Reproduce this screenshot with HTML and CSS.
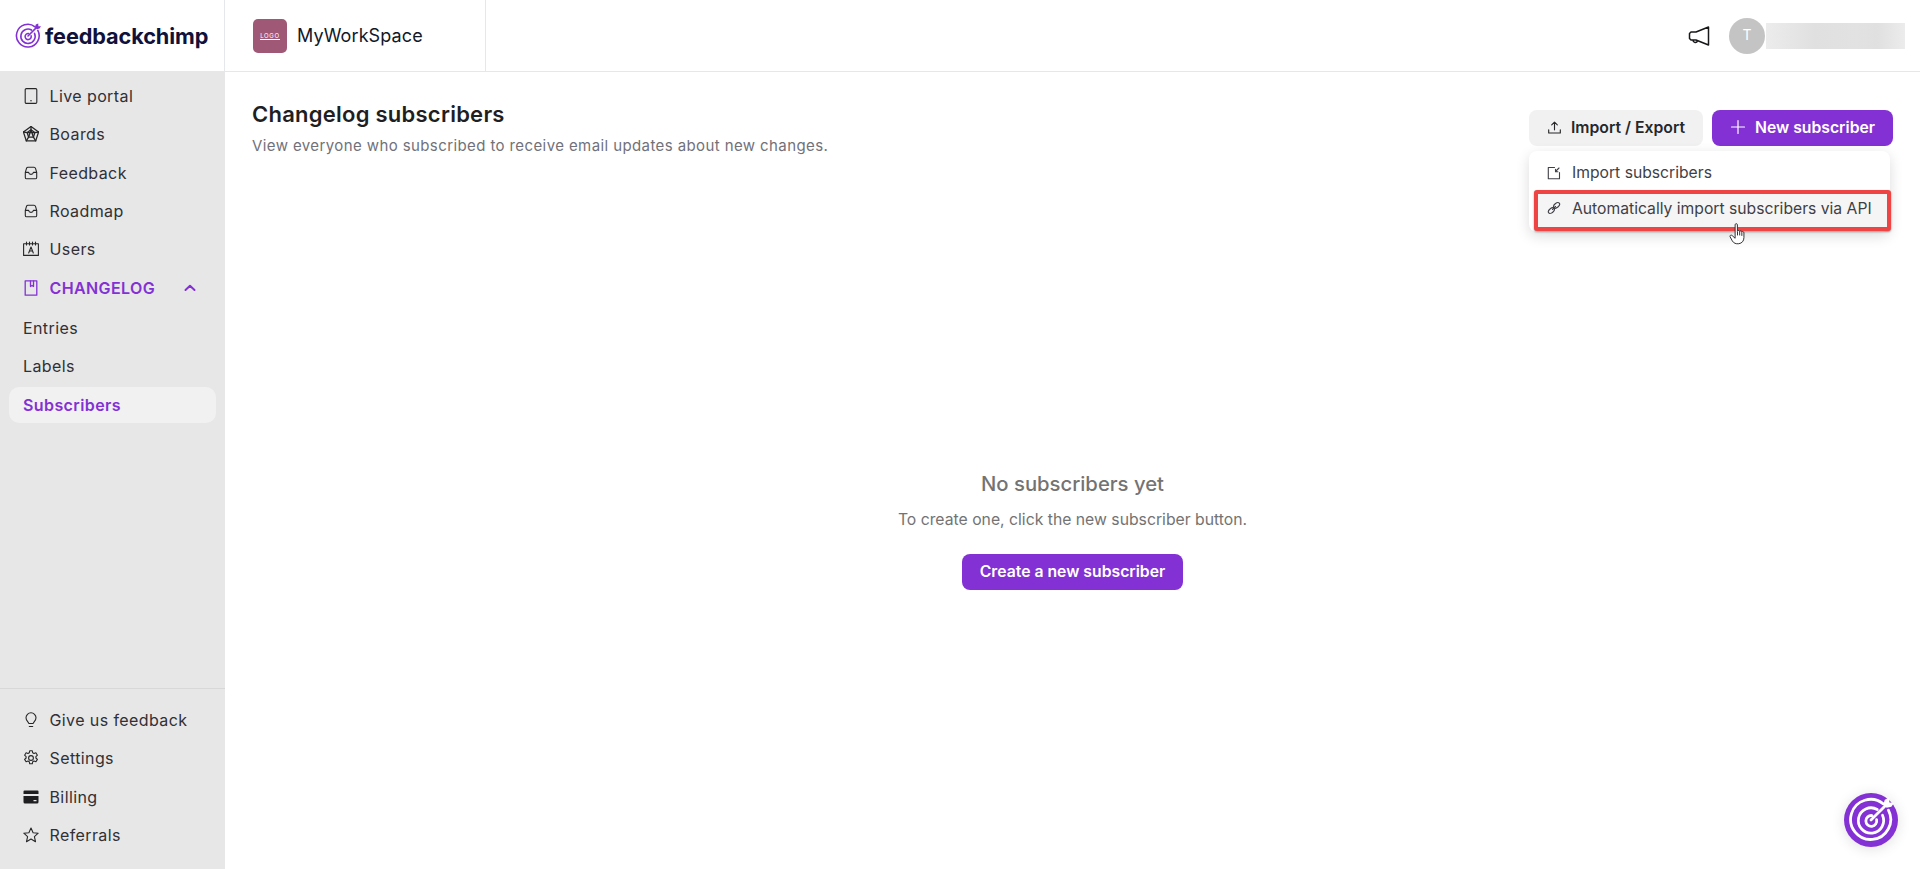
FILE: index.html
```html
<!DOCTYPE html>
<html lang="en">
<head>
<meta charset="utf-8">
<title>Changelog subscribers</title>
<link rel="stylesheet" href="styles.css">
</head>
<body>
<svg class="defs" width="0" height="0" aria-hidden="true">
  <symbol id="target" viewBox="0 0 28 28">
    <g fill="none" stroke="currentColor" stroke-linecap="round">
      <path d="M21.5 4.2A12.2 12.2 0 1 0 24.6 8" stroke-width="1.7"/>
      <path d="M17.8 7.6a7.7 7.7 0 1 0 3.2 3.5" stroke-width="1.7"/>
      <path d="M14.6 11.3a3.3 3.3 0 1 0 2.8 2.5" stroke-width="1.7"/>
      <path d="M14 14 23 5" stroke-width="1.7"/>
    </g>
    <path d="M21.5 4.5 22.4 1.6 25 0.5 25.2 3.4 28 3.6 26.4 6 23.5 6.6Z" fill="currentColor"/>
  </symbol>
</svg>
<div class="app">
  <aside class="sidebar">
    <div class="brand">
      <svg class="brand-mark"><use href="#target"/></svg>
      <span class="brand-name">feedbackchimp</span>
    </div>
    <nav class="nav-top">
      <a class="nav-item"><svg class="ico" viewBox="0 0 16 16"><rect x="2.2" y=".6" width="11.600" height="14.800" rx="1.200"/><path d="M7.600 12.800h.8"/></svg>Live portal</a>
      <a class="nav-item"><svg class="ico ico-dense" viewBox="0 0 16 16"><path d="M8 .5 15.600 6l-2.900 8.900H3.300L.4 6Z"/><path d="M8 3.800 11.800 6.600 10.400 11.200H5.600L4.200 6.600Z"/><path d="M8 .5v3.300M15.600 6l-3.800.6M12.700 14.900l-2.300-3.700M3.300 14.900l2.300-3.700M.4 6l3.800.6M8 3.800 5.600 11.200M8 3.800l2.400 7.400M4.200 6.600h7.600"/></svg>Boards</a>
      <a class="nav-item"><svg class="ico" viewBox="0 0 16 16"><path d="M2.300 7.400 3.500 3.300c.2-.7.8-1.100 1.500-1.100h6c.7 0 1.300.4 1.500 1.100l1.200 4.100M2.300 7.400v5c0 .8.6 1.400 1.400 1.400h8.600c.8 0 1.400-.6 1.400-1.400v-5M2.300 7.400h3.300c.2 1.200 1.100 2 2.400 2s2.200-.8 2.400-2h3.300"/></svg>Feedback</a>
      <a class="nav-item"><svg class="ico" viewBox="0 0 16 16"><path d="M2.300 7.400 3.500 3.300c.2-.7.8-1.100 1.500-1.100h6c.7 0 1.300.4 1.500 1.100l1.200 4.100M2.300 7.400v5c0 .8.6 1.400 1.400 1.400h8.600c.8 0 1.400-.6 1.400-1.400v-5M2.300 7.400h3.300c.2 1.200 1.100 2 2.400 2s2.200-.8 2.400-2h3.300"/></svg>Roadmap</a>
      <a class="nav-item"><svg class="ico" viewBox="0 0 16 16"><rect x=".6" y="2.800" width="14.800" height="11.600"/><path d="M3.500 1v3M6.500 1v3M9.500 1v3M12.500 1v3"/><path d="M5.700 12 8 6l2.300 6M6.500 10h3"/></svg>Users</a>
      <a class="nav-item nav-section"><svg class="ico" viewBox="0 0 16 16"><path d="M2.200.8h11.600v14.400H2.200Z"/><path d="M7.500.8v5.700l1.500-1 1.500 1V.8"/></svg><span class="nav-section-label">CHANGELOG</span><svg class="chev" viewBox="0 0 12 8"><path d="M1.500 6 6 1.800 10.500 6"/></svg></a>
      <a class="nav-sub">Entries</a>
      <a class="nav-sub">Labels</a>
      <a class="nav-sub nav-sub-active">Subscribers</a>
    </nav>
    <nav class="nav-bottom">
      <a class="nav-item"><svg class="ico" viewBox="0 0 16 16"><path d="M5.800 11.500C5.500 9.800 3 8.900 3 5.800a5 5 0 0 1 10 0c0 3.100-2.500 4-2.800 5.700Z"/><path d="M6.300 14.500h3.400"/></svg>Give us feedback</a>
      <a class="nav-item"><svg class="ico" viewBox="0 0 16 16"><circle cx="8" cy="8" r="2.400"/><path d="M6.700.8h2.600l.4 2 1.300.7 1.900-.7 1.500 2.400-1.500 1.400v1.400l1.500 1.400-1.500 2.400-1.900-.7-1.300.7-.4 2H6.700l-.4-2-1.300-.7-1.900.7-1.500-2.400 1.500-1.400V6.600L1.600 5.200l1.500-2.400 1.900.7 1.300-.7Z"/></svg>Settings</a>
      <a class="nav-item"><svg class="ico ico-fill" viewBox="0 0 16 16"><path d="M.5 2.500A1 1 0 0 1 1.500 1.500h13a1 1 0 0 1 1 1V5H.5ZM.5 7h15v6a1.500 1.500 0 0 1-1.500 1.500H2A1.500 1.500 0 0 1 .5 13ZM10.500 11v1.300h3V11Z"/></svg>Billing</a>
      <a class="nav-item"><svg class="ico" viewBox="0 0 16 16"><path d="M8 1 10.100 5.700l5.100.5-3.800 3.400 1.100 5.100L8 12.100l-4.500 2.600 1.100-5.100L.8 6.200l5.100-.5Z"/></svg>Referrals</a>
    </nav>
  </aside>

  <div class="content">
    <header class="topbar">
      <div class="workspace">
        <div class="ws-logo"><span class="ws-logo-text">LOGO</span></div>
        <span class="ws-name">MyWorkSpace</span>
      </div>
      <div class="top-actions">
        <svg class="megaphone" viewBox="0 0 22 22"><path d="M20.500 2v18L8 15H3l-1.500-1.500V8.500L3 7h5ZM5 15.200a2.300 2.300 0 0 0 4.500.6"/></svg>
        <div class="avatar">T</div>
        <div class="redacted"></div>
      </div>
    </header>

    <main class="main">
      <div class="page-head">
        <div>
          <h1 class="page-title">Changelog subscribers</h1>
          <p class="page-sub">View everyone who subscribed to receive email updates about new changes.</p>
        </div>
        <div class="page-actions">
          <button class="btn btn-light"><svg class="btn-ico" viewBox="0 0 16 16"><path d="M1.800 10.500v3.300h12.400v-3.300M8 10.500V2.500M5 5.200 8 2.200l3 3"/></svg>Import / Export</button>
          <button class="btn btn-primary"><svg class="btn-ico btn-plus" viewBox="0 0 16 16"><path d="M8 1.500v13M1.500 8h13"/></svg>New subscriber</button>
        </div>
      </div>
      <div class="menu">
        <a class="menu-item"><svg class="menu-ico" viewBox="0 0 14 14"><path d="M7.500 1.500H1.300v11.200h11.200V6.500M12 2 8.500 5.500M8.500 3.300v2.400h2.400"/></svg>Import subscribers</a>
        <a class="menu-item menu-item-hl"><svg class="menu-ico" viewBox="0 0 14 14"><ellipse cx="9.600" cy="4.400" rx="3.500" ry="2.100" transform="rotate(-40 9.600 4.400)"/><ellipse cx="4.400" cy="9.600" rx="3.500" ry="2.100" transform="rotate(-40 4.400 9.600)"/><path d="M5.500 8.500 8.500 5.500"/></svg>Automatically import subscribers via API</a>
        <svg class="pointer" viewBox="0 0 18 24"><path d="M6.500 2.200c0-1.500 2.400-1.500 2.400 0v7c.3-1.200 2.300-1.200 2.400.2.300-1 2.200-1 2.300.4.500-.8 2.200-.6 2.200 1v5c0 3.500-2 6-5.500 6.500-3 .3-5.300-.5-6.800-3L1.200 15c-.8-1.300 1-2.500 2.200-1.300l3.100 2.800Z"/><path d="M9 9.500v4M11.300 9.500v4M13.600 10v4"/></svg>
      </div>
      <section class="empty">
        <h2 class="empty-title">No subscribers yet</h2>
        <p class="empty-sub">To create one, click the new subscriber button.</p>
        <button class="btn btn-primary btn-cta">Create a new subscriber</button>
      </section>
    </main>
  </div>
</div>
<div class="fab"><svg class="fab-mark"><use href="#target"/></svg></div>
</body>
</html>
```

FILE: styles.css
```css
* { box-sizing: border-box; }
html, body { margin: 0; height: 100%; }
body {
  font-family: Inter, "Liberation Sans", sans-serif;
  color: #27272a;
  background: #fff;
  overflow: hidden;
}
.defs { position: absolute; }
a { display: flex; text-decoration: none; color: inherit; }
.app { display: flex; height: 869px; }

/* sidebar */
.sidebar {
  width: 225px;
  flex: none;
  display: flex;
  flex-direction: column;
  background: #e7e7e7;
}
.brand {
  height: 72px;
  flex: none;
  display: flex;
  align-items: center;
  gap: 4px;
  padding-left: 15px;
  background: #fff;
  border-right: 1px solid #e5e7eb;
  border-bottom: 1px solid #e5e7eb;
}
.brand-mark { width: 26px; height: 26px; color: #8331d4; }
.brand-name { font-size: 21.700px; font-weight: 700; color: #10123c; letter-spacing: -.1px; }
.nav-top { flex: 1; padding: 5px 8px 0; }
.nav-bottom { border-top: 1px solid #d8d8d8; padding: 12px 8px 0; height: 181px; flex: none; }
.nav-item {
  height: 38.300px;
  display: flex;
  align-items: center;
  gap: 10.500px;
  padding-left: 15px;
  font-size: 16px;
  letter-spacing: .4px;
  color: #303036;
}
.ico {
  width: 16px;
  height: 16px;
  flex: none;
  fill: none;
  stroke: #27272a;
  stroke-width: 1.100;
  stroke-linejoin: round;
  stroke-linecap: round;
}
.ico-fill { fill: #1f1f22; stroke: none; fill-rule: evenodd; }
.ico-dense { stroke-width: 1.300; }
.nav-section { color: #8331d4; font-weight: 600; height: 39px; margin-bottom: 2px; }
.nav-section .ico { stroke: #8331d4; stroke-width: 1.300; }
.nav-section-label { flex: 1; }
.chev { width: 12px; height: 8px; margin-right: 21px; fill: none; stroke: #8331d4; stroke-width: 2; stroke-linecap: round; stroke-linejoin: round; }
.nav-sub {
  height: 38px;
  display: flex;
  align-items: center;
  padding-left: 14px;
  font-size: 16px;
  letter-spacing: .4px;
  border-radius: 10px;
  width: 207px;
  margin-left: 1px;
  color: #303036;
}
.nav-sub-active { background: #f1f1f1; color: #8331d4; font-weight: 600; height: 36px; margin-top: 2px; }

/* top bar */
.content { flex: 1; min-width: 0; display: flex; flex-direction: column; }
.topbar {
  height: 72px;
  flex: none;
  display: flex;
  align-items: center;
  justify-content: space-between;
  border-bottom: 1px solid #e5e7eb;
}
.workspace {
  width: 261px;
  height: 100%;
  display: flex;
  align-items: center;
  gap: 10px;
  padding-left: 28px;
  border-right: 1px solid #e5e7eb;
}
.ws-logo {
  width: 34px;
  height: 34px;
  border-radius: 5px;
  background: #a05877;
  display: flex;
  align-items: center;
  justify-content: center;
}
.ws-logo-text {
  width: 20px;
  font-size: 6px;
  line-height: 7px;
  color: #fff;
  text-align: center;
  letter-spacing: .7px;
  border-bottom: 1px solid #fff;
}
.ws-name { font-size: 18px; color: #111827; letter-spacing: .1px; }
.top-actions { display: flex; align-items: center; padding-right: 15px; }
.megaphone { width: 22px; height: 22px; margin-right: 19px; fill: none; stroke: #18181b; stroke-width: 1.500; stroke-linejoin: round; }
.avatar {
  width: 36px;
  height: 36px;
  border-radius: 50%;
  background: #c4c4c4;
  color: #fff;
  font-size: 14px;
  display: flex;
  align-items: center;
  justify-content: center;
  padding-bottom: 3px;
}
.redacted {
  width: 139px;
  height: 26px;
  margin-left: 1px;
  background: linear-gradient(90deg, #ececec, #e0e0e0 35%, #e2e2e2 65%, #e0e0e0 80%, #ececec);
}

/* main */
.main { flex: 1; position: relative; display: flex; flex-direction: column; min-height: 0; }
.page-head {
  display: flex;
  justify-content: space-between;
  align-items: flex-start;
  padding: 27px 27px 0 27px;
}
.page-title { margin: 0; font-size: 22px; line-height: 30px; font-weight: 600; color: #1f1f23; letter-spacing: .25px; }
.page-sub { margin: 6px 0 0; font-size: 15px; line-height: 22px; color: #71717a; letter-spacing: .4px; }
.page-actions { display: flex; gap: 9px; margin-top: 11px; }
.btn {
  height: 36px;
  border: 0;
  border-radius: 8px;
  font-family: inherit;
  font-size: 15.750px;
  font-weight: 600;
  display: flex;
  align-items: center;
  justify-content: center;
  cursor: pointer;
  padding: 0 0 2px;
}
.btn-light { width: 174px; background: #f1f1f1; color: #27272a; gap: 9px; }
.btn-primary { background: #8331d4; color: #fff; }
.page-actions .btn-primary { width: 181px; gap: 9px; }
.btn-ico { width: 15px; height: 15px; fill: none; stroke: #27272a; stroke-width: 1.200; stroke-linecap: round; stroke-linejoin: round; }
.btn-plus { width: 16px; height: 16px; stroke: #fff; }

/* menu */
.menu {
  position: absolute;
  left: 1304px;
  top: 79px;
  width: 361px;
  height: 81px;
  padding-top: 4px;
  background: #fff;
  border-radius: 8px;
  box-shadow: 0 4px 14px rgba(0, 0, 0, .14);
}
.menu-item {
  height: 35px;
  display: flex;
  align-items: center;
  gap: 11px;
  padding-left: 18px;
  font-size: 15.700px;
  color: #3f3f46;
}
.menu-ico { width: 14px; height: 14px; flex: none; fill: none; stroke: #3f3f46; stroke-width: 1.100; stroke-linecap: round; stroke-linejoin: round; }
.menu-item-hl {
  height: 41px;
  margin: 0 -1px 0 5px;
  padding-left: 9px;
  padding-bottom: 5px;
  background: #f5f5f5;
  border: 4px solid #ef4444;
  border-radius: 3px;
  box-shadow: 0 1px 2px rgba(0, 0, 0, .4);
}
.pointer {
  position: absolute;
  left: 200px;
  top: 71px;
  width: 17px;
  height: 24px;
  fill: #fff;
  stroke: #27272a;
  stroke-width: 1;
  stroke-linejoin: round;
}

/* empty state */
.empty {
  position: absolute;
  left: 0;
  right: 0;
  top: 397px;
  display: flex;
  flex-direction: column;
  align-items: center;
}
.empty-title { margin: 0; font-size: 20.250px; line-height: 30px; font-weight: 500; color: #737373; }
.empty-sub { margin: 10px 0 0; font-size: 15.750px; line-height: 22px; color: #737373; }
.btn-cta { width: 221px; margin-top: 23px; }

/* floating button */
.fab {
  position: fixed;
  left: 1844px;
  top: 793px;
  width: 54px;
  height: 54px;
  border-radius: 50%;
  background: #8331d4;
  display: flex;
  align-items: center;
  justify-content: center;
  box-shadow: 0 2px 14px rgba(0, 0, 0, .12);
}
.fab-mark { width: 46px; height: 46px; color: #fff; }
```
